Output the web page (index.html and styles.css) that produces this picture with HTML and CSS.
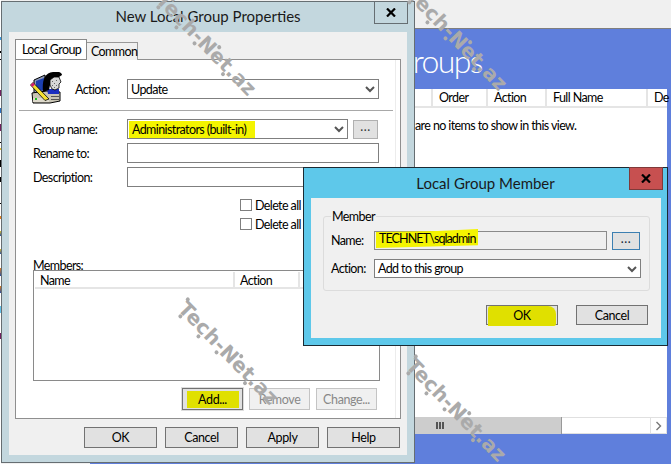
FILE: index.html
```html
<!DOCTYPE html>
<html>
<head>
<meta charset="utf-8">
<title>Local Group Member</title>
<link rel="stylesheet" href="styles.css">
</head>
<body>
<div class="desktop">
  <div class="edge"></div>

  <!-- console behind the dialogs -->
  <div class="console">
    <h1 class="console-title">Groups</h1>
    <div class="grid-view">
      <div class="grid-head">
        <span class="gh gh-blank"></span>
        <span class="gh gh-order">Order</span>
        <span class="gh gh-action">Action</span>
        <span class="gh gh-full">Full Name</span>
        <span class="gh gh-desc">De</span>
      </div>
      <div class="grid-body">are no items to show in this view.</div>
      <div class="hscroll">
        <div class="hscroll-thumb"><span class="grip"></span></div>
        <div class="hscroll-track"></div>
        <div class="hscroll-btn">
          <svg width="7" height="10" viewBox="0 0 7 10"><path d="M1.500 1l4 4-4 4" fill="none" stroke="#777" stroke-width="1.400"/></svg>
        </div>
      </div>
    </div>
  </div>

  <!-- New Local Group Properties -->
  <div class="win win-props">
    <div class="titlebar">New Local Group Properties</div>
    <div class="close close-grey">
      <svg width="10" height="9" viewBox="0 0 10 9"><path d="M1 0.500l8 8M9 0.500l-8 8" stroke="#000" stroke-width="2.200"/></svg>
    </div>
    <div class="client">
      <div class="tabs">
        <span class="tab tab-on">Local Group</span>
        <span class="tab">Common</span>
      </div>
      <div class="panel">
        <div class="action-row">
          <svg class="gp-icon" width="32" height="32" viewBox="0 0 32 32">
            <path d="M4 8l11-5v17l-11 2z" fill="#8e9ab8" stroke="#000"/>
            <path d="M6 9l8-3v12l-8 2z" fill="#1c3fb0"/>
            <path d="M2 21l14-2 14 1v9l-10 2H3z" fill="#c8c4b4" stroke="#000"/>
            <path d="M3 26h16v4H3z" fill="#dedacc"/>
            <path d="M5 26h2v2H5z" fill="#1fc01f"/>
            <path d="M21 24h8v1h-8zM21 27h8v1h-8z" fill="#555"/>
            <path d="M17 17h12v5H18z" fill="#1c2fc0"/>
            <path d="M13 20C12 9 14 1 23 0c4-1 9 0 9 3l-3 2-8 3-2 10z" fill="#000"/>
            <path d="M20 8l4-3 5 0 2 5-2 2 0 4-4 2-3-1-2-4z" fill="#d8d8d8" stroke="#000" stroke-width=".8"/>
            <path d="M22 9h1v1h-1zM24 11h1v1h-1zM22 13h1v1h-1zM26 8h1v1h-1zM26 13h1v1h-1zM24 15h1v1h-1z" fill="#666"/>
            <path d="M0.500 13l2.500-2.500 16 16.500-4 1.500z" fill="#f4e030" stroke="#000" stroke-width=".8"/>
            <path d="M0.500 13l2.500-2.500 2 2-2.500 2.500z" fill="#d02070"/>
          </svg>
          <span class="lbl lbl-action">Action:</span>
          <div class="combo combo-action">Update<svg class="chev" width="10" height="7" viewBox="0 0 10 7"><path d="M1 1l4 4 4-4" fill="none" stroke="#555" stroke-width="2"/></svg></div>
        </div>
        <div class="sep"></div>
        <div class="field field-first">
          <span class="lbl">Group name:</span>
          <div class="combo combo-group"><span class="mark mark-group">Administrators (built-in)</span><svg class="chev" width="10" height="7" viewBox="0 0 10 7"><path d="M1 1l4 4 4-4" fill="none" stroke="#555" stroke-width="2"/></svg></div>
          <button class="btn btn-dots">...</button>
        </div>
        <div class="field">
          <span class="lbl">Rename to:</span>
          <div class="input input-wide"></div>
        </div>
        <div class="field">
          <span class="lbl">Description:</span>
          <div class="input input-wide"></div>
        </div>
        <div class="checks">
          <label class="check"><span class="box"></span>Delete all</label>
          <label class="check"><span class="box"></span>Delete all</label>
        </div>
        <div class="members-lbl">Members:</div>
        <div class="members">
          <div class="members-head">
            <span class="mh mh-name">Name</span>
            <span class="mh mh-action">Action</span>
            <span class="mh mh-rest"></span>
          </div>
        </div>
        <div class="member-btns">
          <button class="btn btn-small btn-add"><span class="mark mark-add">Add...</span></button>
          <button class="btn btn-small btn-off">Remove</button>
          <button class="btn btn-small btn-off">Change...</button>
        </div>
      </div>
      <div class="foot">
        <button class="btn btn-foot">OK</button>
        <button class="btn btn-foot">Cancel</button>
        <button class="btn btn-foot">Apply</button>
        <button class="btn btn-foot">Help</button>
      </div>
    </div>
  </div>

  <!-- Local Group Member -->
  <div class="win win-member">
    <div class="titlebar titlebar-member">Local Group Member</div>
    <div class="close close-red">
      <svg width="10" height="9" viewBox="0 0 10 9"><path d="M1 0.500l8 8M9 0.500l-8 8" stroke="#000" stroke-width="2.200"/></svg>
    </div>
    <div class="client client-member">
      <fieldset class="group">
        <legend>Member</legend>
        <div class="mrow">
          <span class="lbl lbl-short">Name:</span>
          <div class="input input-name"><span class="mark mark-name">TECHNET\sqladmin</span></div>
          <button class="btn btn-dots btn-dots-blue">...</button>
        </div>
        <div class="mrow mrow-2">
          <span class="lbl lbl-short">Action:</span>
          <div class="combo combo-madd">Add to this group<svg class="chev" width="10" height="7" viewBox="0 0 10 7"><path d="M1 1l4 4 4-4" fill="none" stroke="#555" stroke-width="2"/></svg></div>
        </div>
      </fieldset>
      <div class="member-foot">
        <button class="btn btn-m"><span class="mark mark-ok">OK</span></button>
        <button class="btn btn-m">Cancel</button>
      </div>
    </div>
  </div>

  <!-- watermarks -->
  <span class="wm wm1">Tech-Net.az</span>
  <span class="wm wm2">Tech-Net.az</span>
  <span class="wm wm3">Tech-Net.az</span>
  <span class="wm wm4">Tech-Net.az</span>
</div>
</body>
</html>
```

FILE: styles.css
```css
*{ box-sizing:border-box; }
html,body{ margin:0; padding:0; }
body{ background:#f0f0f0; font-family:"Lato","Noto Sans",sans-serif; font-size:12.5px; letter-spacing:-.6px; color:#000; }
.desktop{ position:relative; width:671px; height:464px; overflow:hidden; }
.edge{ position:absolute; left:0; top:0; width:1px; height:464px;
  background:linear-gradient(to bottom,#fff 37px,#3a9be0 37px,#3a9be0 40px,#fff 40px,#fff 51px,#000 51px,#000 53px,#fff 53px,#fff 59px,#000 59px,#000 60px,#fff 60px,#fff 90px,#702060 90px,#702060 96px,#fff 96px,#fff 108px,#2a70c0 108px,#2a70c0 113px,#fff 113px,#fff 124px,#702060 124px,#702060 131px,#fff 131px,#fff 142px,#000 142px,#000 143px,#fff 143px,#fff 148px,#ddc030 148px,#ddc030 150px,#fff 150px,#fff 160px,#000 160px,#000 167px,#fff 167px,#fff 177px,#000 177px,#000 182px,#fff 182px,#fff 203px,#000 203px,#000 204px,#fff 204px,#fff 216px,#e08020 216px,#e08020 219px,#fff 219px,#fff 231px,#ddc030 231px,#2a50a0 236px,#fff 236px,#fff 249px,#ddc030 249px,#2a50a0 254px,#fff 254px,#fff 268px,#e08020 268px,#2a50a0 276px,#fff 276px,#fff 286px,#e08020 286px,#2a50a0 293px,#fff 293px,#fff 306px,#60c0e8 306px,#60c0e8 313px,#fff 313px,#fff 333px,#702060 333px,#702060 339px,#fff 339px); }

/* back window */
.console{ position:absolute; left:90px; top:28px; width:581px; height:436px; background:#5f7fdc; border-top:1px solid #7f7f7f; }
.console-title{ margin:0; height:60px; padding:11px 0 0 301px; font-family:"Lato",sans-serif; font-weight:300; font-size:32px; letter-spacing:-1.6px; line-height:42px; color:#fff; }
.grid-view{ width:577px; height:345px; background:#fff; display:flex; flex-direction:column; }
.grid-head{ display:flex; height:19px; border-bottom:2px solid #e5e5e5; }
.gh{ display:block; height:17px; padding-left:6px; line-height:18px; border-right:2px solid #e5e5e5; }
.gh-blank{ width:343px; }
.gh-order{ width:55px; }
.gh-action{ width:59px; }
.gh-full{ width:101px; }
.gh-desc{ width:19px; border-right:none; }
.grid-body{ flex:1; padding:10px 0 0 325px; }
.hscroll{ display:flex; height:17px; }
.hscroll-thumb{ width:472px; background:#cdcdcd; border-right:1px solid #999; position:relative; display:flex; justify-content:flex-end; align-items:center; padding-right:117px; }
.grip{ display:block; width:8px; height:7px; background:repeating-linear-gradient(to right,#555 0,#555 2px,transparent 2px,transparent 3px); }
.hscroll-track{ width:88px; border-top:1px solid #e0e0e0; border-bottom:1px solid #e0e0e0; }
.hscroll-btn{ width:17px; border:1px solid #e0e0e0; display:flex; align-items:center; justify-content:center; }

/* dialogs */
.win{ position:absolute; border:1px solid #666e72; }
.win-props{ left:1px; top:1px; width:414px; height:462px; background:#c3d7de; }
.win-member{ left:303px; top:167px; width:365px; height:179px; background:#5ec8ea; border-color:#1b2a33; }
.titlebar{ height:30px; text-align:center; font-size:15px; letter-spacing:0; line-height:29px; color:#1a1a1a; }
.titlebar-member{ line-height:31px; }
.close{ position:absolute; top:-1px; display:flex; align-items:center; justify-content:center; height:23px; border:1px solid #666e72; }
.close-grey{ right:6px; width:34px; }
.close-red{ right:4px; width:34px; background:#c75050; border-color:#7f3a3a; }
.client{ width:398px; height:423px; margin-left:7px; background:#f0f0f0; padding:7px 7px 0 6px; }
.tabs{ display:flex; align-items:flex-end; height:21px; margin-bottom:-1px; position:relative; }
.tab{ display:block; height:18px; padding:0 4px; line-height:18px; border:1px solid #999; border-bottom:none; background:#f0f0f0; white-space:nowrap; }
.tab-on{ height:21px; width:72px; padding:0 6px; line-height:19px; background:#fff; border-bottom:1px solid #fff; border-color:#8a8a8a; position:relative; z-index:1; }
.tab + .tab{ margin-left:-1px; padding:0 4px; width:52px; }
.panel{ width:386px; height:360px; background:#fff; border:1px solid #8f8f8f; padding-top:12px; box-shadow:inset -4px 0 0 #fff,inset -5px 0 0 #ececec; }
.action-row{ display:flex; height:34px; padding-left:14px; position:relative; align-items:center; }
.gp-icon{ align-self:flex-start; }
.lbl{ display:block; width:94px; flex:none; }
.lbl-action{ width:52px; margin-left:13px; }
.sep{ height:1px; width:374px; margin:4px 0 0 3px; background:#a8a8a8; }
.field{ display:flex; align-items:center; height:20px; margin:4px 0 0 17px; }
.field-first{ margin-top:8px; }
.combo,.input{ position:relative; height:20px; border:1px solid #7f7f7f; background:#fff; display:flex; align-items:center; padding-left:3px; color:#000; white-space:nowrap; }
.combo-action{ width:252px; }
.combo-group{ width:221px; padding-left:1px; }
.combo-madd{ width:267px; height:19px; padding-left:3px; }
.input-wide{ width:252px; }
.input-name{ width:233px; height:19px; background:#efefef; padding-left:1px; border-color:#8a8a8a; }
.chev{ position:absolute; right:3px; top:6px; }
.mark{ display:flex; align-items:center; background:#f4f400; }
.mark-group{ width:126px; height:17px; padding-left:3px; }
.mark-name{ width:102px; height:19px; margin-top:-4px; padding-left:3px; letter-spacing:-.9px; clip-path:polygon(0 3px,60% 2px,100% 0,100% 85%,0 100%); }
.mark-add{ width:52px; height:17px; justify-content:center; background:#e0e000; }
.mark-ok{ width:68px; height:20px; justify-content:center; background:#e0e000; margin-top:1px; border-radius:3px 8px 2px 0; }
.btn{ display:flex; align-items:center; justify-content:center; padding:0; font:inherit; letter-spacing:-.4px; color:#000; background:#e1e1e1; border:1px solid #727272; }
.btn-dots{ width:25px; height:19px; margin-left:5px; border-color:#b0b0b0; padding-bottom:5px; letter-spacing:.6px; color:#333; }
.btn-dots-blue{ width:28px; border-color:#3c7fb1; height:18px; color:#123; }
.checks{ margin:12px 0 0 224px; width:100px; }
.check{ display:flex; align-items:center; height:12px; margin-bottom:7px; white-space:nowrap; }
.box{ display:block; flex:none; width:12px; height:12px; margin-right:3px; border:1px solid #7f7f7f; background:#fff; }
.members-lbl{ margin:28px 0 0 17px; height:12px; line-height:15px; }
.members{ width:347px; height:111px; margin-left:17px; border:1px solid #8a8a8a; padding:1px; }
.members-head{ display:flex; height:17px; border-bottom:2px solid #e5e5e5; }
.mh{ display:block; height:15px; padding-left:5px; line-height:18px; border-right:2px solid #e5e5e5; }
.mh-name{ width:200px; }
.mh-action{ width:65px; }
.mh-rest{ border-right:none; }
.member-btns{ display:flex; gap:6px; margin:7px 0 0 166px; }
.btn-small{ width:61px; height:22px; }
.btn-add{ background:#e1e1e1; outline:1px solid #ddd; }
.btn-off{ background:#f0f0f0; color:#888; border-color:#c4c4c4; }
.foot{ display:flex; gap:8px; margin:8px 0 0 69px; }
.btn-foot{ width:73px; height:21px; }

/* member dialog */
.client-member{ width:350px; height:140px; margin:0 0 0 7px; padding:12px 0 0 12px; }
.group{ width:327px; height:81px; margin:0; padding:0 0 0 7px; border:1px solid #dcdcdc; border-radius:3px; }
.group legend{ padding:0 1px; line-height:13px; height:13px; }
.mrow{ display:flex; align-items:center; height:19px; margin-top:8px; }
.mrow-2{ margin-top:9px; }
.lbl-short{ width:43px; }
.member-foot{ display:flex; gap:18px; margin:14px 0 0 163px; }
.btn-m{ width:72px; height:20px; }

/* watermark */
.wm{ position:absolute; display:block; transform:rotate(46deg); transform-origin:0 50%; font-family:"DejaVu Sans",sans-serif; font-weight:bold; font-size:20px; line-height:20px; letter-spacing:.2px; color:#aaa; white-space:nowrap; }
.wm::before{ content:""; position:absolute; left:-2px; top:0; width:4px; height:4px; border-radius:50%; background:#aaa; box-shadow:7px 17px 0 #aaa,34px 18px 0 #aaa,58px 16px 0 #aaa,78px 1px 0 #aaa,100px 17px 0 #aaa; }
.wm1{ left:160px; top:-14px; }
.wm2{ left:411px; top:-19px; }
.wm3{ left:182px; top:295px; }
.wm4{ left:410px; top:352px; }
```
